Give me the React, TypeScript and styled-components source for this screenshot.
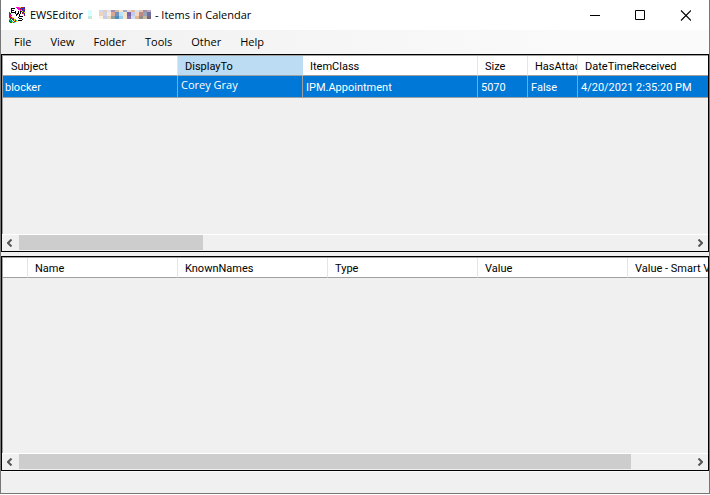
import React from "react";
import styled, { createGlobalStyle } from "styled-components";

const GlobalStyle = createGlobalStyle`
  * { box-sizing: border-box; }
  body { margin: 0; background: #fff; }
  button { font: inherit; color: inherit; border: 0; padding: 0; background: transparent; }
`;

const Window = styled.div`
  display: flex;
  flex-direction: column;
  height: calc(100vh - 1px);
  border: solid #777;
  border-width: 0 1px 1px;
  background: #f0f0f0;
  color: #000;
  font-family: "Open Sans", "Noto Sans", sans-serif;
  font-size: 11px;
  overflow: hidden;
`;

const TitleBar = styled.header`
  display: flex;
  align-items: center;
  flex: 0 0 30px;
  padding: 0 1px 0 8px;
  background: #fff;
`;

const Title = styled.h1`
  display: flex;
  align-items: center;
  gap: 4px;
  flex: 1;
  margin: 0 0 0 5px;
  font-size: 11px;
  font-weight: 400;
  line-height: 16px;
  white-space: nowrap;
`;

const CaptionButton = styled.button`
  display: grid;
  place-items: center;
  width: 45px;
  height: 28px;
`;

const MenuBar = styled.nav`
  display: flex;
  flex: 0 0 24px;
  gap: 19px;
  padding-left: 13px;
  background: linear-gradient(90deg, #f0f0f0, #fafafa 80%);
`;

const MenuItem = styled.button`
  line-height: 24px;
`;

const Panels = styled.main`
  display: flex;
  flex-direction: column;
  flex: 1;
  gap: 4px;
  min-height: 0;
`;

const Panel = styled.section<{ $share: number }>`
  display: flex;
  flex-direction: column;
  flex: ${(p) => p.$share} 1 0;
  min-height: 0;
  border: 1px solid #000;
  overflow: hidden;
`;

const GridArea = styled.div`
  flex: 1;
  min-height: 0;
  border-top: 1px solid #a0a0a0;
  border-left: 1px solid #a0a0a0;
  overflow: hidden;
`;

const Grid = styled.table`
  table-layout: fixed;
  width: 100%;
  border-collapse: separate;
  border-spacing: 0;
  font-family: Roboto, "Liberation Sans", sans-serif;
  font-size: 11px;
`;

const Col = styled.col<{ $width?: number }>`
  width: ${(p) => (p.$width ? `${p.$width}px` : "auto")};
`;

const HeaderCell = styled.th<{ $sorted?: boolean }>`
  height: 20px;
  padding: 2px 0 0 7px;
  border-right: 1px solid ${(p) => (p.$sorted ? "#bcdcf4" : "#e5e5e5")};
  border-bottom: 1px solid #a0a0a0;
  background: ${(p) => (p.$sorted ? "#bcdcf4" : "#fff")};
  font-weight: 400;
  line-height: 17px;
  text-align: left;
  white-space: nowrap;
  overflow: hidden;

  &:first-child { padding-left: 8px; }
  &:last-child { border-right: 0; }
`;

const Cell = styled.td`
  height: 22px;
  padding: 2px 0 0 3px;
  border-right: 1px solid #a0a0a0;
  border-bottom: 1px solid #a0a0a0;
  background: #0078d7;
  color: #fff;
  line-height: 19px;
  white-space: nowrap;
  overflow: hidden;

  &:first-child { padding-left: 2px; }
  &:last-child { border-right: 0; }
`;

const PersonName = styled.span`
  display: block;
  font-family: "Open Sans", "Noto Sans", sans-serif;
  line-height: 14px;
  padding-bottom: 5px;
`;

const ScrollRow = styled.div`
  display: flex;
  flex: 0 0 17px;
  border-top: 1px solid #fff;
`;

const ScrollButton = styled.button`
  display: grid;
  place-items: center;
  width: 17px;
  height: 16px;
`;

const Track = styled.div`
  flex: 1;
  padding-bottom: 1px;
`;

const Thumb = styled.div<{ $size: number }>`
  width: ${(p) => p.$size}%;
  height: 15px;
  background: #cdcdcd;
`;

const StatusBar = styled.footer`
  flex: 0 0 22px;
  border-top: 1px solid #f8f8f8;
`;

const iconRows = [
  ".......mmmcybrrb",
  "..kkkk..mmmbrbrb",
  "..k......mmrmbgr",
  "..kkk.....ymwbrb",
  "..k...k..k.kbyrb",
  "g.kkkkk..k.k.bby",
  "rg....k.kk.k.rmb",
  "gr.....kk.k...yb",
  "rmg....k..k....r",
  "gry.......kkkk..",
  "grgy.....k......",
  "ygrmr.....kkk...",
  "cg.gryc......k..",
  "gcr.gyrc.kkkk...",
  "rgmc.rgy........",
  "ygrygc..........",
];

const iconColors: Record<string, string> = {
  k: "#000", m: "#ff00dd", b: "#292aae", r: "#e60028",
  g: "#007d22", y: "#ffee00", c: "#13d9ea",
};

function AppIcon() {
  return (
    <svg width="16" height="16" viewBox="0 0 16 16" shapeRendering="crispEdges" aria-hidden="true">
      {iconRows.flatMap((row, y) =>
        [...row].map((c, x) =>
          iconColors[c] ? <rect key={`${x}-${y}`} x={x} y={y} width="1" height="1" fill={iconColors[c]} /> : null
        )
      )}
    </svg>
  );
}

const mosaic = [
  ["#d6ffff", "#fff", "#d1d8ee", "#e6ccb8", "#dfe0ed", "#a28eaf", "#d8bb9f", "#f4e5cc", "#9cabcc", "#eed9cf", "#e6b99f", "#d3e3f2", "#e2c8b3", "#a98c9f", "#b6afc7"],
  ["#d8ffff", "#fff", "#efd4bd", "#ccd4ec", "#f6e9d9", "#d7a78f", "#6d91c0", "#b9e2f2", "#f4e3c9", "#7862ac", "#c2cdea", "#f5d6c1", "#bd8985", "#96a3ba", "#706e9c"],
  ["#c5e8e1", "#fff", "#fff1dd", "#c2ccec", "#ead4bb", "#91a29f", "#4a8cc2", "#9dcce9", "#f9e5ca", "#8874ad", "#d1def0", "#e7b78f", "#948c89", "#c4b99d", "#766783"],
];

function RedactedVersion() {
  return (
    <svg width="64" height="10" viewBox="0 0 64 10" shapeRendering="crispEdges" aria-hidden="true">
      {mosaic.map((row, y) =>
        row.map((fill, x) => (
          <rect key={`${x}-${y}`} x={x === 0 ? 1 : x * 4 + 4} y={[0, 2, 6][y]} width="4" height={[2, 4, 3][y]} fill={fill} />
        ))
      )}
    </svg>
  );
}

function Chevron({ right }: { right?: boolean }) {
  return (
    <svg width="7" height="8" viewBox="0 0 7 8" aria-hidden="true">
      <path d={right ? "M2.5 .5 6 4 2.5 7.5" : "M4.5 .5 1 4l3.5 3.5"} fill="none" stroke="#555" strokeWidth="2" />
    </svg>
  );
}

function ScrollBar({ size, controls }: { size: number; controls: string }) {
  return (
    <ScrollRow>
      <ScrollButton type="button" aria-label="Scroll left"><Chevron /></ScrollButton>
      <Track role="scrollbar" aria-orientation="horizontal" aria-controls={controls} aria-valuenow={0}>
        <Thumb $size={size} />
      </Track>
      <ScrollButton type="button" aria-label="Scroll right"><Chevron right /></ScrollButton>
    </ScrollRow>
  );
}

const itemColumns = [
  { label: "Subject", width: 175 },
  { label: "DisplayTo", width: 125, sorted: true },
  { label: "ItemClass", width: 175 },
  { label: "Size", width: 50 },
  { label: "HasAttac", width: 50 },
  { label: "DateTimeReceived" },
];

const propertyColumns = [
  { label: "", width: 25 },
  { label: "Name", width: 150 },
  { label: "KnownNames", width: 150 },
  { label: "Type", width: 150 },
  { label: "Value", width: 150 },
  { label: "Value - Smart V" },
];

export default function App() {
  return (
    <Window>
      <GlobalStyle />
      <TitleBar>
        <AppIcon />
        <Title>
          <span>EWSEditor</span>
          <RedactedVersion />
          <span>- Items in Calendar</span>
        </Title>
        <CaptionButton type="button" aria-label="Minimize">
          <svg width="11" height="11" viewBox="0 0 11 11"><path d="M0 5.5h10" stroke="#000" /></svg>
        </CaptionButton>
        <CaptionButton type="button" aria-label="Maximize">
          <svg width="11" height="11" viewBox="0 0 11 11"><path d="M.5.5h9v9h-9z" fill="none" stroke="#000" /></svg>
        </CaptionButton>
        <CaptionButton type="button" aria-label="Close">
          <svg width="11" height="11" viewBox="0 0 11 11"><path d="m1 .5 10 10M11 .5l-10 10" stroke="#000" strokeWidth="1.1" /></svg>
        </CaptionButton>
      </TitleBar>
      <MenuBar aria-label="Main menu">
        {["File", "View", "Folder", "Tools", "Other", "Help"].map((name) => (
          <MenuItem key={name} type="button">{name}</MenuItem>
        ))}
      </MenuBar>
      <Panels>
        <Panel $share={198} aria-label="Items">
          <GridArea>
            <Grid id="items">
              <colgroup>{itemColumns.map((c) => <Col key={c.label} $width={c.width} />)}</colgroup>
              <thead>
                <tr>
                  {itemColumns.map((c) => (
                    <HeaderCell key={c.label} scope="col" $sorted={c.sorted}>{c.label}</HeaderCell>
                  ))}
                </tr>
              </thead>
              <tbody>
                <tr>
                  <Cell>blocker</Cell>
                  <Cell><PersonName>Corey Gray</PersonName></Cell>
                  <Cell>IPM.Appointment</Cell>
                  <Cell>5070</Cell>
                  <Cell>False</Cell>
                  <Cell>4/20/2021 2:35:20 PM</Cell>
                </tr>
              </tbody>
            </Grid>
          </GridArea>
          <ScrollBar size={27.4} controls="items" />
        </Panel>
        <Panel $share={215} aria-label="Properties">
          <GridArea>
            <Grid id="properties">
              <colgroup>{propertyColumns.map((c) => <Col key={c.label} $width={c.width} />)}</colgroup>
              <thead>
                <tr>
                  {propertyColumns.map((c) => <HeaderCell key={c.label} scope="col">{c.label}</HeaderCell>)}
                </tr>
              </thead>
            </Grid>
          </GridArea>
          <ScrollBar size={91} controls="properties" />
        </Panel>
      </Panels>
      <StatusBar />
    </Window>
  );
}
